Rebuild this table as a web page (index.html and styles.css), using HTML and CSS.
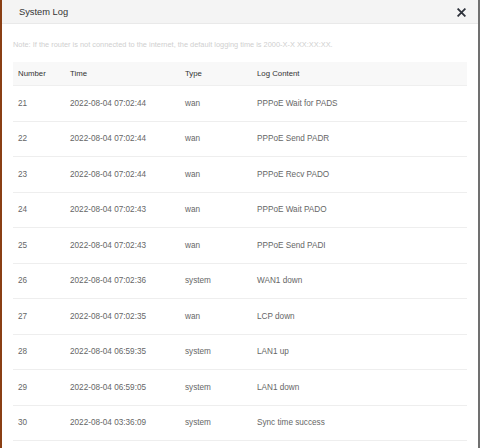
FILE: index.html
```html
<!DOCTYPE html>
<html>
<head>
<meta charset="utf-8">
<link rel="stylesheet" href="styles.css">
</head>
<body>
<div class="dialog">
  <div class="head">
    <span class="title">System Log</span>
    <svg class="close" width="9" height="9" viewBox="0 0 9 9"><path d="M1.2 1.2 L7.8 7.8 M7.8 1.2 L1.2 7.8" stroke="#2e323b" stroke-width="1.8" stroke-linecap="square"/></svg>
  </div>
  <div class="body">
    <p class="note">Note: If the router is not connected to the internet, the default logging time is 2000-X-X XX:XX:XX.</p>
    <table class="log">
      <thead>
        <tr><th class="c1">Number</th><th class="c2">Time</th><th class="c3">Type</th><th>Log Content</th></tr>
      </thead>
      <tbody>
        <tr><td>21</td><td>2022-08-04 07:02:44</td><td>wan</td><td>PPPoE Wait for PADS</td></tr>
        <tr><td>22</td><td>2022-08-04 07:02:44</td><td>wan</td><td>PPPoE Send PADR</td></tr>
        <tr><td>23</td><td>2022-08-04 07:02:44</td><td>wan</td><td>PPPoE Recv PADO</td></tr>
        <tr><td>24</td><td>2022-08-04 07:02:43</td><td>wan</td><td>PPPoE Wait PADO</td></tr>
        <tr><td>25</td><td>2022-08-04 07:02:43</td><td>wan</td><td>PPPoE Send PADI</td></tr>
        <tr><td>26</td><td>2022-08-04 07:02:36</td><td>system</td><td>WAN1 down</td></tr>
        <tr><td>27</td><td>2022-08-04 07:02:35</td><td>wan</td><td>LCP down</td></tr>
        <tr><td>28</td><td>2022-08-04 06:59:35</td><td>system</td><td>LAN1 up</td></tr>
        <tr><td>29</td><td>2022-08-04 06:59:05</td><td>system</td><td>LAN1 down</td></tr>
        <tr><td>30</td><td>2022-08-04 03:36:09</td><td>system</td><td>Sync time success</td></tr>
      </tbody>
    </table>
  </div>
</div>
</body>
</html>
```
FILE: styles.css
```css
html, body {
  margin: 0;
  padding: 0;
  height: 100%;
  background: #fff;
}
body {
  font-family: "Liberation Sans", Arial, sans-serif;
}
.dialog {
  box-sizing: border-box;
  height: 448px;
  border-left: 2px solid #8a3f14;
  border-right: 2px solid #707070;
  background: #fff;
  overflow: hidden;
}
.head {
  height: 24px;
  box-sizing: border-box;
  background: #f4f4f4;
  border-bottom: 1px solid #e9e9e9;
  display: flex;
  align-items: center;
  justify-content: space-between;
  padding: 0 12px 0 17px;
}
.title {
  font-size: 9.3px;
  color: #333;
}
.close {
  margin-top: 1px;
}
.body {
  padding: 0 11px;
}
.note {
  margin: 0;
  padding: 16px 0 0 0;
  height: 24px;
  box-sizing: border-box;
  font-size: 7.4px;
  line-height: 10px;
  color: #cfcfcf;
}
.log {
  width: 100%;
  margin-top: 14px;
  border-collapse: collapse;
  font-size: 8.2px;
}
.log th {
  background: #f8f8f8;
  color: #333;
  font-weight: normal;
  font-size: 7.8px;
  text-align: left;
  height: 23px;
  padding: 0 0 0 5px;
  border-bottom: 1px solid #efefef;
}
.log td {
  color: #666;
  height: 34.5px;
  padding: 0 0 0 5px;
  border-bottom: 1px solid #eeeeee;
}
.c1 { width: 47px; }
.c2 { width: 110px; }
.c3 { width: 67px; }
```
